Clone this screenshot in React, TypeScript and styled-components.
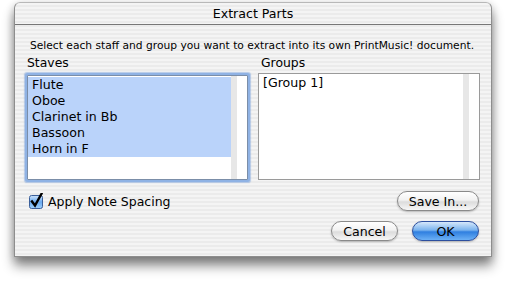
import React from "react"
import styled, { createGlobalStyle } from "styled-components"

const GlobalStyle = createGlobalStyle`
    html, body {
        margin: 0;
        padding: 0;
        background: #ffffff;
    }
    body {
        font-family: "DejaVu Sans", "Liberation Sans", sans-serif;
        color: #000;
        -webkit-font-smoothing: antialiased;
    }
`

// aqua pinstripes
const stripes = `repeating-linear-gradient(
    to bottom,
    #f4f4f4 0px,
    #f4f4f4 2px,
    #ebebeb 2px,
    #ebebeb 4px
)`

const Page = styled.div`
    width: 506px;
    height: 281px;
    box-sizing: border-box;
    padding: 2px 0 0 14px;
    overflow: hidden;
`

const Window = styled.div`
    width: 478px;
    height: 255px;
    box-sizing: border-box;
    display: flex;
    flex-direction: column;
    border: 1px solid #8d8d8d;
    border-top-color: #b8b8b8;
    border-radius: 6px 6px 0 0;
    background: ${stripes};
    box-shadow: 0 9px 12px rgba(0, 0, 0, 0.45), 0 2px 8px rgba(0, 0, 0, 0.2);
`

const TitleBar = styled.div`
    height: 21px;
    flex: 0 0 auto;
    display: flex;
    align-items: center;
    justify-content: center;
    font-size: 12.6px;
    border-bottom: 1px solid #777;
    border-radius: 6px 6px 0 0;
`

const Body = styled.div`
    flex: 1 1 auto;
    display: flex;
    flex-direction: column;
    padding: 0 11px 0 9px;
`

const Instruction = styled.div`
    font-size: 10.7px;
    text-align: center;
    margin: 14px 0 3px 0;
    white-space: nowrap;
`

const Columns = styled.div`
    display: grid;
    grid-template-columns: 226px 222px;
    column-gap: 8px;
`

const Column = styled.div`
    display: flex;
    flex-direction: column;
`

const Label = styled.div`
    font-size: 12.4px;
    padding-left: 3px;
    height: 15px;
    line-height: 15px;
    margin-bottom: 3px;
`

const ListBox = styled.div<{ $focused?: boolean }>`
    position: relative;
    height: ${p => (p.$focused ? 103 : 105)}px;
    margin: ${p => (p.$focused ? "2px 2px 1px 3px" : "0")};
    display: flex;
    background: #fff;
    border: 1px solid ${p => (p.$focused ? "#7b8ea8" : "#9a9a9a")};
    box-shadow: ${p => (p.$focused ? "0 0 0 2px #8fb2e4, 0 0 1px 3px rgba(120,160,220,0.5)" : "none")};
    border-radius: ${p => (p.$focused ? "1px" : "0")};
`

const Items = styled.div`
    flex: 1 1 auto;
    padding-top: 1px;
`

const Item = styled.div<{ $selected?: boolean }>`
    height: 16px;
    line-height: 16px;
    font-size: 12.6px;
    padding-left: 4px;
    background: ${p => (p.$selected ? "#bad3fa" : "transparent")};
`

const Track = styled.div`
    width: 6px;
    background: #e7e7e7;
    margin-right: 10px;
`

const BottomRow = styled.div`
    display: flex;
    justify-content: space-between;
    align-items: center;
    margin-top: 10px;
    padding-left: 5px;
    padding-right: 1px;
`

const CheckLabel = styled.label`
    display: flex;
    align-items: center;
    gap: 4px;
    font-size: 12.5px;
`

const ButtonRow = styled.div`
    display: flex;
    justify-content: flex-end;
    gap: 14px;
    margin-top: 10px;
    padding-right: 1px;
`

const Button = styled.div<{ $default?: boolean; $width: number }>`
    width: ${p => p.$width}px;
    height: 20px;
    box-sizing: border-box;
    display: flex;
    align-items: center;
    justify-content: center;
    font-size: 12.6px;
    border-radius: 10px;
    border: 1px solid ${p => (p.$default ? "#2d4f9e" : "#8a8a8a")};
    background: ${p =>
        p.$default
            ? "linear-gradient(to bottom, #d6e8fb 0%, #7ab3ee 45%, #2f7fe0 55%, #6cb0f5 100%)"
            : "linear-gradient(to bottom, #ffffff 0%, #f2f2f2 45%, #dcdcdc 55%, #f7f7f7 100%)"};
    box-shadow: 0 1px 2px rgba(0, 0, 0, 0.25);
`

const CheckBox = () => (
    <svg width="15" height="16" viewBox="0 0 15 16">
        <defs>
            <linearGradient id="cb" x1="0" y1="0" x2="0" y2="1">
                <stop offset="0" stopColor="#cfe4fb" />
                <stop offset="0.5" stopColor="#6aaaf0" />
                <stop offset="1" stopColor="#9fd0fb" />
            </linearGradient>
        </defs>
        <rect x="0.5" y="2.5" width="13" height="13" rx="2" fill="url(#cb)" stroke="#3b5f9a" />
        <path d="M3 8.5 L6 12.5 L12.5 0.8" fill="none" stroke="#000" strokeWidth="2.4" strokeLinecap="square" />
    </svg>
)

const staves = ["Flute", "Oboe", "Clarinet in Bb", "Bassoon", "Horn in F"]

export default function App() {
    return (
        <Page>
            <GlobalStyle />
            <Window>
                <TitleBar>Extract Parts</TitleBar>
                <Body>
                    <Instruction>
                        Select each staff and group you want to extract into its own PrintMusic! document.
                    </Instruction>
                    <Columns>
                        <Column>
                            <Label>Staves</Label>
                            <ListBox $focused>
                                <Items>
                                    {staves.map(s => (
                                        <Item key={s} $selected>{s}</Item>
                                    ))}
                                </Items>
                                <Track />
                            </ListBox>
                        </Column>
                        <Column>
                            <Label>Groups</Label>
                            <ListBox>
                                <Items>
                                    <Item>[Group 1]</Item>
                                </Items>
                                <Track />
                            </ListBox>
                        </Column>
                    </Columns>
                    <BottomRow>
                        <CheckLabel>
                            <CheckBox />
                            Apply Note Spacing
                        </CheckLabel>
                        <Button $width={82}>Save In...</Button>
                    </BottomRow>
                    <ButtonRow>
                        <Button $width={67}>Cancel</Button>
                        <Button $width={67} $default>OK</Button>
                    </ButtonRow>
                </Body>
            </Window>
        </Page>
    )
}
